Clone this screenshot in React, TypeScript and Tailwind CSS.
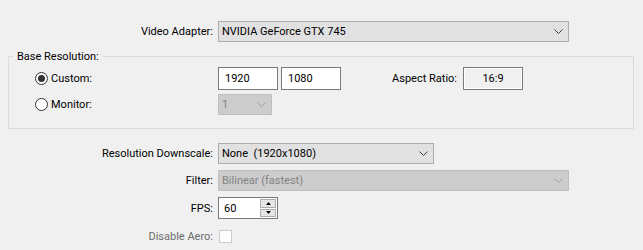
const FONT = "font-['Segoe_UI',Roboto,'Liberation_Sans',sans-serif]";

function Chevron({ dim }: { dim?: boolean }) {
  return (
    <svg width="9" height="5" viewBox="0 0 9 5" className="shrink-0">
      <path d="M0.5 0.5 L4.5 4.5 L8.5 0.5" fill="none" stroke={dim ? '#a0a0a0' : '#404040'} strokeWidth="1" />
    </svg>
  );
}

function Combo({ value, width, disabled }: { value: string; width: string; disabled?: boolean }) {
  return (
    <div
      className={`${width} h-[21px] flex items-center justify-between pl-[3px] pr-[5px] border ${
        disabled ? 'bg-[#cccccc] border-[#bfbfbf] text-[#838383]' : 'bg-[#e1e1e1] border-[#adadad] text-black'
      }`}
    >
      <span className="whitespace-pre">{value}</span>
      <Chevron dim={disabled} />
    </div>
  );
}

function Radio({ checked }: { checked?: boolean }) {
  return (
    <span className="w-[13px] h-[13px] rounded-full border border-[#333333] bg-white flex items-center justify-center shrink-0">
      {checked && <span className="w-[7px] h-[7px] rounded-full bg-[#333333]" />}
    </span>
  );
}

function Row({ label, children, dim, className = '' }: { label: string; children: React.ReactNode; dim?: boolean; className?: string }) {
  return (
    <div className={`flex items-center ${className}`}>
      <div className={`w-[218px] pr-[5px] text-right shrink-0 ${dim ? 'text-[#6d6d6d]' : 'text-black'}`}>{label}</div>
      {children}
    </div>
  );
}

export default function App() {
  return (
    <div className={`w-[643px] h-[250px] bg-[#f0f0f0] text-[11px] leading-[15px] overflow-hidden pt-[21px] ${FONT}`}>
      <Row label="Video Adapter:">
        <Combo value="NVIDIA GeForce GTX 745" width="w-[351px]" />
      </Row>

      <fieldset className="ml-[8px] mt-[7px] w-[626px] h-[80px] border border-[#dcdcdc] px-[4px] pt-[3px]">
        <legend className="px-[4px]">Base Resolution:</legend>
        <div className="flex items-center h-[23px] ml-[22px]">
          <div className="w-[183px] flex items-center gap-[3px] shrink-0">
            <Radio checked />
            <span>Custom:</span>
          </div>
          <div className="w-[60px] h-[23px] bg-white border border-[#7a7a7a] flex items-center pl-[6px]">1920</div>
          <div className="ml-[3px] w-[60px] h-[23px] bg-white border border-[#7a7a7a] flex items-center pl-[6px]">1080</div>
          <span className="w-[122px] text-right pr-[6px]">Aspect Ratio:</span>
          <div className="w-[60px] h-[23px] border border-[#7a7a7a] flex items-center justify-center">
            <div className="w-full h-full border border-white flex items-center justify-center">16:9</div>
          </div>
        </div>
        <div className="flex items-center h-[21px] mt-[4px] ml-[22px]">
          <div className="w-[183px] flex items-center gap-[3px] shrink-0">
            <Radio />
            <span>Monitor:</span>
          </div>
          <Combo value="1" width="w-[54px]" disabled />
        </div>
      </fieldset>

      <Row label="Resolution Downscale:" className="mt-[14px]">
        <Combo value="None  (1920x1080)" width="w-[216px]" />
      </Row>
      <Row label="Filter:" className="mt-[6px]">
        <Combo value="Bilinear (fastest)" width="w-[351px]" disabled />
      </Row>
      <Row label="FPS:" className="mt-[6px]">
        <div className="w-[60px] h-[22px] bg-white border border-[#7a7a7a] flex items-stretch">
          <span className="flex-1 flex items-center pl-[5px]">60</span>
          <div className="w-[18px] flex flex-col gap-[1px] p-[1px]">
            <div className="flex-1 bg-[#e5e5e5] border border-[#acacac] flex items-center justify-center">
              <svg width="5" height="3" viewBox="0 0 5 3"><path d="M2.5 0 L5 3 L0 3 Z" fill="#000" /></svg>
            </div>
            <div className="flex-1 bg-[#e5e5e5] border border-[#acacac] flex items-center justify-center">
              <svg width="5" height="3" viewBox="0 0 5 3"><path d="M0 0 L5 0 L2.5 3 Z" fill="#000" /></svg>
            </div>
          </div>
        </div>
      </Row>
      <Row label="Disable Aero:" dim className="mt-[10px]">
        <span className="ml-[1px] w-[13px] h-[13px] border border-[#cccccc] bg-white" />
      </Row>
    </div>
  );
}
